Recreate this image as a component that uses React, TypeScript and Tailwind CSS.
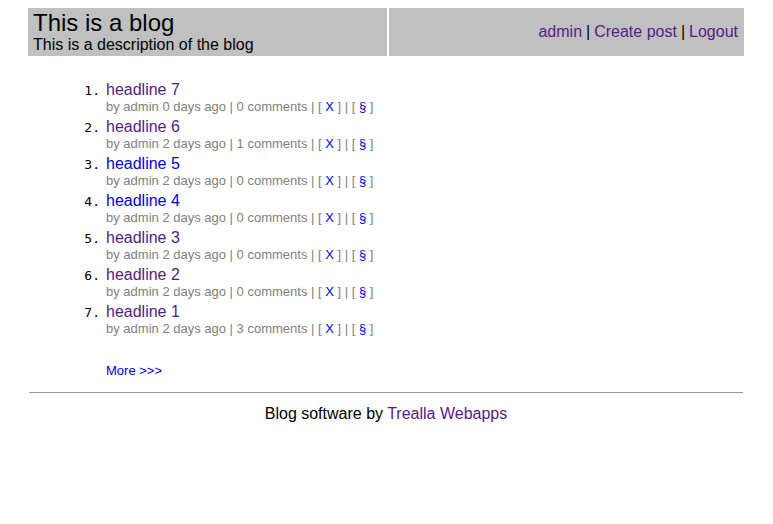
export default function App() {
  const posts = [
    { title: 'headline 7', age: '0 days ago', comments: 0, visited: true },
    { title: 'headline 6', age: '2 days ago', comments: 1, visited: true },
    { title: 'headline 5', age: '2 days ago', comments: 0, visited: false },
    { title: 'headline 4', age: '2 days ago', comments: 0, visited: false },
    { title: 'headline 3', age: '2 days ago', comments: 0, visited: true },
    { title: 'headline 2', age: '2 days ago', comments: 0, visited: true },
    { title: 'headline 1', age: '2 days ago', comments: 3, visited: true },
  ]

  return (
    <div className="min-h-screen bg-white pt-2 font-['Liberation_Sans',Arial,sans-serif] text-black">
      {/* Header */}
      <div className="ml-[28px] flex h-12 w-[716px] gap-[2px]">
        <div className="flex w-[359px] flex-col justify-center bg-[#c0c0c0] pl-[5px]">
          <div className="text-[24px] leading-[26px]">This is a blog</div>
          <div className="text-[16px] leading-[18px]">This is a description of the blog</div>
        </div>
        <div className="flex flex-1 items-center justify-end bg-[#c0c0c0] pr-[6px] text-[16px]">
          <a href="#" className="text-[#551a8b]">admin</a>
          <span className="mx-[4px]">|</span>
          <a href="#" className="text-[#551a8b]">Create post</a>
          <span className="mx-[4px]">|</span>
          <a href="#" className="text-[#551a8b]">Logout</a>
        </div>
      </div>

      {/* Posts */}
      <div className="ml-[28px] w-[716px]">
        <ol className="mt-[25px]">
          {posts.map((p, i) => (
            <li key={p.title} className="mb-[3px] flex items-baseline gap-[6px]">
              <span className="w-[72px] text-right font-['DejaVu_Sans_Mono',monospace] text-[13px]">{i + 1}.</span>
              <div>
                <a
                  href="#"
                  className={'block text-[16px] leading-[18px] ' + (p.visited ? 'text-[#551a8b]' : 'text-[#0000ee]')}
                >
                  {p.title}
                </a>
                <div className="text-[13px] leading-[16px] text-[#808080]">
                  by admin {p.age} | {p.comments} comments | [ <a href="#" className="text-[#0000ee]">X</a> ] | [{' '}
                  <a href="#" className="text-[#0000ee]">§</a> ]
                </div>
              </div>
            </li>
          ))}
        </ol>
        <div className="mt-[26px] pl-[78px] text-[13px] leading-[16px]">
          <a href="#" className="text-[#0000ee]">More &gt;&gt;&gt;</a>
        </div>
        <hr className="mx-[1px] mt-[13px] border-t border-[#9a9a9a]" />
        <p className="mt-[12px] text-center text-[16px] leading-[18px]">
          Blog software by <a href="#" className="text-[#551a8b]">Trealla Webapps</a>
        </p>
      </div>
    </div>
  )
}
